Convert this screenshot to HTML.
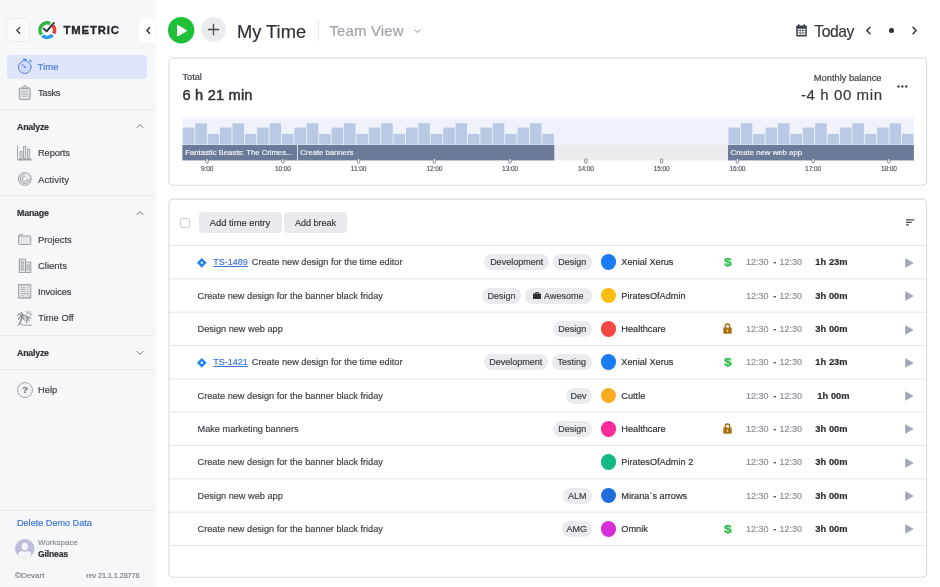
<!DOCTYPE html>
<html lang="en"><head><meta charset="utf-8"><title>TMetric - My Time</title>
<style>
*{box-sizing:border-box;margin:0;padding:0}
html,body{width:940px;height:587px;overflow:hidden;background:#fff;font-family:"Liberation Sans",sans-serif;}
.t{position:absolute;white-space:nowrap;line-height:14px;-webkit-text-stroke:0.18px currentColor;}
.abs{position:absolute}
.side{position:absolute;left:0;top:0;width:155px;height:587px;background:#f6f7f9;}
.hr{position:absolute;left:0;width:155px;height:1px;background:#e9ebee}
.card{position:absolute;background:#fff;border:1px solid #e4e5e9;border-radius:4px;}
.sep{position:absolute;left:169px;width:757px;height:1px;background:#e4e6ea}
.tag{-webkit-text-stroke:0.18px currentColor;position:absolute;height:16px;border-radius:8px;background:#eaebef;color:#3a3d45;font-size:9px;line-height:16px;text-align:center;white-space:nowrap}
.dot{position:absolute;width:15.8px;height:15.8px;border-radius:50%}
.btn{position:absolute;background:#e9eaee;border-radius:4px;color:#33363d;font-size:9px;text-align:center;white-space:nowrap}
svg{position:absolute;overflow:visible}
</style></head><body><div id="app" style="position:absolute;left:0;top:0;width:940px;height:587px;will-change:transform">

<div class="abs" style="left:155px;top:0;width:1px;height:587px;background:#f9fafb"></div>
<div class="side">
<div class="abs" style="left:6px;top:18px;width:24px;height:24px;border:1px solid #eaecef;border-radius:4px;background:#f8f9fa"></div>
<svg style="left:15px;top:26px" width="7" height="9" viewBox="0 0 7 9"><path d="M4.6 1.6 L1.8 4.4 L4.6 7.2" fill="none" stroke="#2b2e35" stroke-width="1.3" stroke-linecap="round" stroke-linejoin="round"/></svg>
<svg style="left:34.6px;top:18.2px" width="24.4" height="24.4" viewBox="0 0 24.4 24.4"><circle cx="12.2" cy="12.2" r="11.9" fill="#fff" stroke="#f1e3e7" stroke-width="0.6"/><path d="M5.03 17.80 A9.1 9.1 0 0 1 16.05 3.95 L14.52 7.22 A5.5 5.5 0 0 0 7.87 15.59 Z" fill="#2db742"/><path d="M19.37 6.60 A9.1 9.1 0 0 1 20.23 16.47 L17.06 14.78 A5.5 5.5 0 0 0 16.53 8.81 Z" fill="#ef4136"/><path d="M18.96 18.29 A9.1 9.1 0 0 1 6.11 18.96 L8.52 16.29 A5.5 5.5 0 0 0 16.29 15.88 Z" fill="#2d9ce8"/><path d="M8.6 10.6 L11.6 13.3 L18.9 4.9" fill="none" stroke="#2a2c33" stroke-width="1.8" stroke-linecap="round" stroke-linejoin="round"/></svg>
<div class="t " style="left:63.5px;top:23.30px;font-size:11.3px;color:#25272d;font-weight:700;letter-spacing:0.85px;-webkit-text-stroke:0.35px #25272d">TMETRIC</div>
<div class="abs" style="left:139px;top:18px;width:16px;height:24px;background:#fff;border-radius:4px 0 0 4px"></div>
<svg style="left:145px;top:26px" width="7" height="9" viewBox="0 0 7 9"><path d="M4.6 1.6 L1.9 4.5 L4.6 7.4" fill="none" stroke="#2b2e35" stroke-width="1.4" stroke-linecap="round" stroke-linejoin="round"/></svg>
<div class="abs" style="left:6.5px;top:55px;width:140.2px;height:23.5px;border-radius:4px;background:#dfe6fa"></div>
<svg style="left:0;top:0" width="155" height="587" viewBox="0 0 155 587">
<g fill="none" stroke="#5a84ea" stroke-linecap="round"><circle cx="24.8" cy="67.1" r="6.4" fill="#cfdafa" stroke-width="1"/><path d="M23.4 59.4 h2.8" stroke-width="1.3"/><path d="M24.8 59.6 v1" stroke-width="1"/><path d="M29.9 60.3 l1.2 1.2" stroke-width="1.3"/><path d="M21.9 64.1 L24.8 67.2" stroke-width="1"/></g><circle cx="24.8" cy="67.2" r="0.9" fill="#5a84ea"/>
<g stroke="#92969e" stroke-width="0.9" stroke-linejoin="round"><rect x="19.3" y="88" width="10.9" height="11.6" rx="1" fill="#d4d6da"/><rect x="20.8" y="89.6" width="7.9" height="8.6" fill="#e9eaed" stroke="none"/><path d="M22.3 88.3 L23.3 86.3 Q24.75 84.9 26.2 86.3 L27.2 88.3 Z" fill="#dfe0e4"/></g>
<path d="M21.4 91 h6.7 M21.4 92.8 h6.7 M21.4 94.6 h6.7 M21.4 96.4 h6.7" stroke="#a9adb4" stroke-width="0.8"/>
<g fill="#e4e5e9" stroke="#92969e" stroke-width="0.8"><path d="M17.5 145.8 V159.6 H31.8" fill="none" stroke-width="0.9"/><path d="M17.5 160.3 H31.8" fill="none" stroke-width="0.5"/><rect x="20" y="151.5" width="2" height="7.2"/><rect x="23.6" y="146.4" width="2.1" height="12.3"/><rect x="27.5" y="149" width="2.2" height="9.7"/></g>
<g fill="none" stroke="#92969e"><circle cx="24.8" cy="179" r="6.4" fill="#e9eaed" stroke-width="0.9"/><path d="M24.8 174.4 a4.6 4.6 0 1 0 4.6 4.6" stroke-width="0.8"/><path d="M24.8 176.4 a2.6 2.6 0 1 0 2.6 2.6" stroke-width="0.8"/></g><circle cx="24.6" cy="179.2" r="1.1" fill="#fbfbfc"/>
<path d="M18.6 243.4 V235.6 Q18.6 234.6 19.6 234.6 H22.6 L23.8 236 H29.8 Q30.8 236 30.8 237 V243.4 Q30.8 244.5 29.8 244.5 H19.6 Q18.6 244.5 18.6 243.4 Z" fill="#e4e5e9" stroke="#92969e" stroke-width="0.9" stroke-linejoin="round"/><path d="M18.8 236.3 H23.4" stroke="#92969e" stroke-width="0.6"/>
<g fill="#e4e5e9" stroke="#92969e" stroke-width="0.9"><rect x="19.3" y="259.1" width="6.2" height="13.3"/><rect x="25.5" y="262.2" width="5.3" height="10.2"/></g><g fill="none" stroke="#92969e" stroke-width="0.6"><rect x="21.2" y="261.6" width="2.2" height="2"/><rect x="21.2" y="264.8" width="2.2" height="2"/><rect x="21.2" y="268" width="2.2" height="2"/><rect x="27" y="264.8" width="2.2" height="2"/><rect x="27" y="268" width="2.2" height="2"/></g>
<rect x="18.6" y="284.9" width="12.2" height="13" fill="#e4e5e9" stroke="#92969e" stroke-width="0.9"/><path d="M18.4 284.5 H31 M18.4 298.3 H31" stroke="#92969e" stroke-width="0.9" stroke-dasharray="0.9 0.7"/><path d="M20.8 287.6 h4.4 M20.8 289.5 h4.4 M20.8 291.4 h4.4 M27 287.6 h1.6 M27 289.5 h1.6 M27 291.4 h1.6 M20.2 293.6 h9 M21 295.8 h3.4 M27 295.8 h1.6" stroke="#a3a7ae" stroke-width="0.8"/>
<g fill="none" stroke="#858a93" stroke-linecap="round"><path d="M17.6 325.2 Q21 322.6 23.4 325.2 H32" stroke-width="0.8"/><path d="M22.4 316.4 Q21.6 320 19.4 323.6" stroke-width="1.3"/><path d="M27.6 317.4 Q27.4 320.4 26.4 323" stroke-width="1.1"/><path d="M22.6 316 Q20 312.6 17.6 315.4 M22.6 316 Q19.6 315.6 18.4 319.4 M22.6 316 Q22.8 319 24.8 320.4 M22.6 316 Q25.4 314.8 27 317.2 M22.6 316 Q23.6 313.4 21.2 312.4 M22.6 316 Q20.8 317.6 21 320.6" stroke-width="1.1"/><path d="M27.8 317 Q25.8 315.8 24.6 318 M27.8 317 Q30 316.2 31 318.6 M27.8 317 Q29.6 318.6 29.2 321 M27.8 317 Q26.2 318.8 26.6 320.6" stroke-width="0.9"/><path d="M26.6 314.4 a2 2 0 1 1 3.6 1.4" stroke-width="0.8"/><path d="M28.2 310.8 v0.9 M31.8 314 h-0.8 M30.9 311.6 l-0.6 0.6 M25.6 311.7 l0.6 0.6" stroke-width="0.7"/></g>
</svg>
<div class="t " style="left:37.6px;top:59.80px;font-size:9.55px;color:#4a7ae0;font-weight:400;letter-spacing:0px;">Time</div>
<div class="t " style="left:38px;top:86.00px;font-size:9.3px;color:#3e4148;font-weight:400;letter-spacing:-0.32px;">Tasks</div>
<div class="hr" style="top:109px"></div>
<div class="t " style="left:17px;top:120.00px;font-size:8.9px;color:#2f3239;font-weight:700;letter-spacing:-0.25px;">Analyze</div>
<svg style="left:136px;top:123.4px" width="8" height="6" viewBox="0 0 8 6"><path d="M1 4.6 L4 1.6 L7 4.6" fill="none" stroke="#6f747d" stroke-width="1" stroke-linecap="round" stroke-linejoin="round"/></svg>
<div class="t " style="left:38px;top:146.20px;font-size:9.3px;color:#3e4148;font-weight:400;letter-spacing:-0.12px;">Reports</div>
<div class="t " style="left:38px;top:172.50px;font-size:9.6px;color:#3e4148;font-weight:400;letter-spacing:0.08px;">Activity</div>
<div class="hr" style="top:195px"></div>
<div class="t " style="left:17px;top:206.20px;font-size:8.9px;color:#2f3239;font-weight:700;letter-spacing:-0.22px;">Manage</div>
<svg style="left:136px;top:209.5px" width="8" height="6" viewBox="0 0 8 6"><path d="M1 4.6 L4 1.6 L7 4.6" fill="none" stroke="#6f747d" stroke-width="1" stroke-linecap="round" stroke-linejoin="round"/></svg>
<div class="t " style="left:38px;top:232.50px;font-size:9.35px;color:#3e4148;font-weight:400;letter-spacing:0px;">Projects</div>
<div class="t " style="left:38px;top:258.90px;font-size:9.45px;color:#3e4148;font-weight:400;letter-spacing:0px;">Clients</div>
<div class="t " style="left:38px;top:284.50px;font-size:9.3px;color:#3e4148;font-weight:400;letter-spacing:-0.1px;">Invoices</div>
<div class="t " style="left:38.3px;top:310.70px;font-size:9.4px;color:#3e4148;font-weight:400;letter-spacing:0px;">Time Off</div>
<div class="hr" style="top:335px"></div>
<div class="t " style="left:17px;top:346.20px;font-size:8.9px;color:#2f3239;font-weight:700;letter-spacing:-0.25px;">Analyze</div>
<svg style="left:136px;top:350px" width="8" height="6" viewBox="0 0 8 6"><path d="M1 1.4 L4 4.4 L7 1.4" fill="none" stroke="#6f747d" stroke-width="1" stroke-linecap="round" stroke-linejoin="round"/></svg>
<div class="hr" style="top:369px"></div>
<div class="abs" style="left:16.7px;top:381.8px;width:16px;height:16px;border-radius:50%;border:1px solid #a3a7ae;background:#f1f2f4"></div>
<div class="t " style="left:22.2px;top:383.00px;font-size:9.5px;color:#70757d;font-weight:700;letter-spacing:0px;">?</div>
<div class="t " style="left:38px;top:382.80px;font-size:9.3px;color:#3e4148;font-weight:400;letter-spacing:0px;">Help</div>
<div class="hr" style="top:510px"></div>
<div class="t " style="left:17px;top:515.50px;font-size:9.1px;color:#3f74dc;font-weight:400;letter-spacing:0px;">Delete Demo Data</div>
<svg style="left:15px;top:539px" width="19.5" height="19.5" viewBox="0 0 20 20">
<defs><clipPath id="av"><circle cx="10" cy="10" r="10"/></clipPath></defs>
<circle cx="10" cy="10" r="10" fill="#b9bfdd"/>
<g clip-path="url(#av)"><ellipse cx="10" cy="7.8" rx="3.3" ry="3.9" fill="#f4f5fb"/><path d="M3.2 20 V16.4 Q3.2 12.8 7.2 12.2 Q10 14 12.8 12.2 Q16.8 12.8 16.8 16.4 V20 Z" fill="#f4f5fb"/></g>
</svg>
<div class="t " style="left:38px;top:535.80px;font-size:8px;color:#868b94;font-weight:400;letter-spacing:0px;">Workspace</div>
<div class="t " style="left:38px;top:546.60px;font-size:8.6px;color:#26282e;font-weight:700;letter-spacing:-0.15px;">Gilneas</div>
<div class="t " style="left:15px;top:568.50px;font-size:8px;color:#7d828b;font-weight:400;letter-spacing:0px;">©Devart</div>
<div class="t " style="left:86.3px;top:568.50px;font-size:7.3px;color:#7d828b;font-weight:400;letter-spacing:-0.1px;">rev 21.1.1.28778</div>
</div>
<svg style="left:168.2px;top:16.5px" width="26.4" height="26.4" viewBox="0 0 26.4 26.4"><circle cx="13.2" cy="13.2" r="13.2" fill="#20c038"/><path d="M9.9 9 L17.9 13.7 L9.9 18.4 Z" fill="#fff" stroke="#fff" stroke-width="1.8" stroke-linejoin="round"/></svg>
<svg style="left:200.6px;top:17.3px" width="25" height="25" viewBox="0 0 25 25"><circle cx="12.5" cy="12.5" r="12.5" fill="#ebecf0"/><path d="M12.5 6.8 V18.2 M6.8 12.5 H18.2" stroke="#4a4d55" stroke-width="1.3"/></svg>
<div class="t " style="left:237px;top:24.70px;font-size:18.3px;color:#2e3138;font-weight:400;letter-spacing:0px;line-height:22px;margin-top:-4px">My Time</div>
<div class="abs" style="left:318px;top:19px;width:1px;height:22px;background:#e6e8eb"></div>
<div class="t " style="left:329.4px;top:23.70px;font-size:14.9px;color:#9ea2ab;font-weight:400;letter-spacing:0.2px;line-height:22px;margin-top:-4px">Team View</div>
<svg style="left:413.6px;top:28.8px" width="7" height="5" viewBox="0 0 7 5"><path d="M1 1 L3.5 3.6 L6 1" fill="none" stroke="#8a8f98" stroke-width="1" stroke-linecap="round" stroke-linejoin="round"/></svg>
<svg style="left:795.8px;top:23.6px" width="11" height="12.7" viewBox="0 0 11 12.7"><path d="M2.7 0.3 V2.4 M8.3 0.3 V2.4" stroke="#3a3d45" stroke-width="1.4"/><rect x="0.2" y="1.6" width="10.6" height="10.9" rx="1.2" fill="#3a3d45"/><g fill="#fff"><rect x="1.6" y="4.7" width="2.2" height="1.7"/><rect x="4.4" y="4.7" width="2.2" height="1.7"/><rect x="7.2" y="4.7" width="2.2" height="1.7"/><rect x="1.6" y="7" width="2.2" height="1.7"/><rect x="4.4" y="7" width="2.2" height="1.7"/><rect x="7.2" y="7" width="2.2" height="1.7"/><rect x="1.6" y="9.3" width="2.2" height="1.7"/><rect x="4.4" y="9.3" width="2.2" height="1.7"/><rect x="7.2" y="9.3" width="2.2" height="1.7"/></g></svg>
<div class="t " style="left:814.3px;top:24.80px;font-size:15.7px;color:#33363d;font-weight:400;letter-spacing:-0.45px;line-height:22px;margin-top:-4px">Today</div>
<svg style="left:865px;top:25.6px" width="7" height="9" viewBox="0 0 7 9"><path d="M5 1.2 L1.8 4.5 L5 7.8" fill="none" stroke="#2b2e35" stroke-width="1.4" stroke-linecap="round" stroke-linejoin="round"/></svg>
<div class="abs" style="left:889px;top:28.2px;width:4.6px;height:4.6px;border-radius:50%;background:#2b2e35"></div>
<svg style="left:911.4px;top:25.6px" width="7" height="9" viewBox="0 0 7 9"><path d="M2 1.2 L5.2 4.5 L2 7.8" fill="none" stroke="#2b2e35" stroke-width="1.4" stroke-linecap="round" stroke-linejoin="round"/></svg>
<svg style="left:0;top:0" width="940" height="587" viewBox="0 0 940 587"><rect x="169" y="58" width="757.6" height="127.2" rx="4" fill="#fff" stroke="#d9dade" stroke-width="1.05"/><rect x="169" y="199.1" width="757.6" height="378.2" rx="4" fill="#fff" stroke="#d9dade" stroke-width="1.05"/></svg>
<div class="t " style="left:182.5px;top:70.00px;font-size:9.2px;color:#3a3d45;font-weight:400;letter-spacing:0px;">Total</div>
<div class="t " style="left:182.5px;top:88.40px;font-size:14.6px;color:#30333a;font-weight:400;letter-spacing:0.2px;line-height:20px;margin-top:-3px;-webkit-text-stroke:0.5px #30333a">6 h 21 min</div>
<div class="t" style="right:58.5px;top:70.70px;font-size:9.3px;color:#3a3d45;font-weight:400;letter-spacing:0px;">Monthly balance</div>
<div class="t" style="right:58px;top:87.90px;font-size:15.0px;color:#33363d;font-weight:400;letter-spacing:0.6px;margin-right:-0.6px;line-height:20px;margin-top:-3px">-4 h 00 min</div>
<svg style="left:896.6px;top:85.2px" width="11" height="3" viewBox="0 0 11 3"><circle cx="1.5" cy="1.5" r="1.15" fill="#2b2e35"/><circle cx="5.4" cy="1.5" r="1.15" fill="#2b2e35"/><circle cx="9.3" cy="1.5" r="1.15" fill="#2b2e35"/></svg>
<svg style="left:0;top:0" width="940" height="200" viewBox="0 0 940 200">
<rect x="182.4" y="117.8" width="731.5" height="27.2" fill="#eef2fb"/>
<rect x="182.4" y="145.0" width="731.5" height="15.4" fill="#ececef"/>
<g fill="#b9c8e3"><rect x="182.85" y="127.6" width="11.50" height="17.0"/><rect x="195.25" y="123.3" width="11.50" height="21.3"/><rect x="207.64" y="133.9" width="11.50" height="10.7"/><rect x="220.04" y="127.6" width="11.50" height="17.0"/><rect x="232.44" y="123.3" width="11.50" height="21.3"/><rect x="244.83" y="133.9" width="11.50" height="10.7"/><rect x="257.23" y="127.6" width="11.50" height="17.0"/><rect x="269.63" y="123.3" width="11.50" height="21.3"/><rect x="282.02" y="133.9" width="11.50" height="10.7"/><rect x="294.42" y="127.6" width="11.50" height="17.0"/><rect x="306.82" y="123.3" width="11.50" height="21.3"/><rect x="319.21" y="133.9" width="11.50" height="10.7"/><rect x="331.61" y="127.6" width="11.50" height="17.0"/><rect x="344.01" y="123.3" width="11.50" height="21.3"/><rect x="356.40" y="133.9" width="11.50" height="10.7"/><rect x="368.80" y="127.6" width="11.50" height="17.0"/><rect x="381.20" y="123.3" width="11.50" height="21.3"/><rect x="393.59" y="133.9" width="11.50" height="10.7"/><rect x="405.99" y="127.6" width="11.50" height="17.0"/><rect x="418.39" y="123.3" width="11.50" height="21.3"/><rect x="430.78" y="133.9" width="11.50" height="10.7"/><rect x="443.18" y="127.6" width="11.50" height="17.0"/><rect x="455.58" y="123.3" width="11.50" height="21.3"/><rect x="467.97" y="133.9" width="11.50" height="10.7"/><rect x="480.37" y="127.6" width="11.50" height="17.0"/><rect x="492.77" y="123.3" width="11.50" height="21.3"/><rect x="505.16" y="133.9" width="11.50" height="10.7"/><rect x="517.56" y="127.6" width="11.50" height="17.0"/><rect x="529.96" y="123.3" width="11.50" height="21.3"/><rect x="542.35" y="133.9" width="11.50" height="10.7"/><rect x="728.45" y="127.6" width="11.49" height="17.0"/><rect x="740.84" y="123.3" width="11.49" height="21.3"/><rect x="753.24" y="133.9" width="11.49" height="10.7"/><rect x="765.63" y="127.6" width="11.49" height="17.0"/><rect x="778.02" y="123.3" width="11.49" height="21.3"/><rect x="790.42" y="133.9" width="11.49" height="10.7"/><rect x="802.81" y="127.6" width="11.49" height="17.0"/><rect x="815.20" y="123.3" width="11.49" height="21.3"/><rect x="827.60" y="133.9" width="11.49" height="10.7"/><rect x="839.99" y="127.6" width="11.49" height="17.0"/><rect x="852.38" y="123.3" width="11.49" height="21.3"/><rect x="864.78" y="133.9" width="11.49" height="10.7"/><rect x="877.17" y="127.6" width="11.49" height="17.0"/><rect x="889.56" y="123.3" width="11.49" height="21.3"/><rect x="901.96" y="133.9" width="11.49" height="10.7"/></g>
<rect x="182.4" y="145.0" width="371.9" height="15.4" fill="#6b7a99"/>
<rect x="728.0" y="145.0" width="185.9" height="15.4" fill="#6b7a99"/>
<rect x="297" y="145.0" width="0.9" height="15.4" fill="#e8ebf2"/>
<rect x="205.95" y="158.7" width="2.3" height="4.6" rx="1.15" fill="#f3f4f7" stroke="#666b77" stroke-width="0.7"/>
<rect x="281.70" y="158.7" width="2.3" height="4.6" rx="1.15" fill="#f3f4f7" stroke="#666b77" stroke-width="0.7"/>
<rect x="357.45" y="158.7" width="2.3" height="4.6" rx="1.15" fill="#f3f4f7" stroke="#666b77" stroke-width="0.7"/>
<rect x="433.20" y="158.7" width="2.3" height="4.6" rx="1.15" fill="#f3f4f7" stroke="#666b77" stroke-width="0.7"/>
<rect x="508.95" y="158.7" width="2.3" height="4.6" rx="1.15" fill="#f3f4f7" stroke="#666b77" stroke-width="0.7"/>
<rect x="584.70" y="158.7" width="2.3" height="4.6" rx="1.15" fill="#f3f4f7" stroke="#666b77" stroke-width="0.7"/>
<rect x="660.45" y="158.7" width="2.3" height="4.6" rx="1.15" fill="#f3f4f7" stroke="#666b77" stroke-width="0.7"/>
<rect x="736.20" y="158.7" width="2.3" height="4.6" rx="1.15" fill="#f3f4f7" stroke="#666b77" stroke-width="0.7"/>
<rect x="811.95" y="158.7" width="2.3" height="4.6" rx="1.15" fill="#f3f4f7" stroke="#666b77" stroke-width="0.7"/>
<rect x="887.70" y="158.7" width="2.3" height="4.6" rx="1.15" fill="#f3f4f7" stroke="#666b77" stroke-width="0.7"/>
</svg>
<div class="t " style="left:185.3px;top:146.20px;font-size:7.7px;color:#f1f3f8;font-weight:400;letter-spacing:0px;">Fantastic Beasts: The Crimes...</div>
<div class="t " style="left:300.3px;top:146.20px;font-size:7.7px;color:#f1f3f8;font-weight:400;letter-spacing:0px;">Create banners</div>
<div class="t " style="left:730.6px;top:146.20px;font-size:7.8px;color:#f1f3f8;font-weight:400;letter-spacing:0px;">Create new web app</div>
<div class="t" style="left:187.1px;width:40px;text-align:center;top:162.4px;font-size:6.6px;letter-spacing:-0.1px;color:#555963">9:00</div>
<div class="t" style="left:262.9px;width:40px;text-align:center;top:162.4px;font-size:6.6px;letter-spacing:-0.1px;color:#555963">10:00</div>
<div class="t" style="left:338.6px;width:40px;text-align:center;top:162.4px;font-size:6.6px;letter-spacing:-0.1px;color:#555963">11:00</div>
<div class="t" style="left:414.4px;width:40px;text-align:center;top:162.4px;font-size:6.6px;letter-spacing:-0.1px;color:#555963">12:00</div>
<div class="t" style="left:490.1px;width:40px;text-align:center;top:162.4px;font-size:6.6px;letter-spacing:-0.1px;color:#555963">13:00</div>
<div class="t" style="left:565.9px;width:40px;text-align:center;top:162.4px;font-size:6.6px;letter-spacing:-0.1px;color:#555963">14:00</div>
<div class="t" style="left:641.6px;width:40px;text-align:center;top:162.4px;font-size:6.6px;letter-spacing:-0.1px;color:#555963">15:00</div>
<div class="t" style="left:717.4px;width:40px;text-align:center;top:162.4px;font-size:6.6px;letter-spacing:-0.1px;color:#555963">16:00</div>
<div class="t" style="left:793.1px;width:40px;text-align:center;top:162.4px;font-size:6.6px;letter-spacing:-0.1px;color:#555963">17:00</div>
<div class="t" style="left:868.9px;width:40px;text-align:center;top:162.4px;font-size:6.6px;letter-spacing:-0.1px;color:#555963">18:00</div>
<div class="abs" style="left:180.2px;top:217.8px;width:10px;height:10px;border:1px solid #cdd0d6;border-radius:2px;background:#fff"></div>
<div class="btn" style="left:199px;top:212px;width:82.6px;height:20.5px"></div>
<div class="btn" style="left:284.3px;top:212px;width:62.4px;height:20.5px"></div>
<div class="t " style="left:209.7px;top:215.70px;font-size:9.4px;color:#33363d;font-weight:400;letter-spacing:0px;">Add time entry</div>
<div class="t " style="left:294.9px;top:215.70px;font-size:9.05px;color:#33363d;font-weight:400;letter-spacing:0px;">Add break</div>
<svg style="left:906px;top:219px" width="9" height="7" viewBox="0 0 9 7"><path d="M0 0.8 H8.3 M0 3.3 H5.7 M0 5.8 H3" stroke="#464a53" stroke-width="1.3"/></svg>
<svg style="left:196.7px;top:257.7px" width="9.6" height="9.6" viewBox="0 0 9.6 9.6"><path d="M4.8 0.2 L9.4 4.8 L4.8 9.4 L0.2 4.8 Z" fill="#1d7ff2" stroke="#1d7ff2" stroke-width="0.4" stroke-linejoin="round"/><path d="M4.8 3.3 L6.3 4.8 L4.8 6.3 L3.3 4.8 Z" fill="#fff"/></svg>
<div class="t " style="left:213.3px;top:255.20px;font-size:9.0px;color:#3f74dc;font-weight:400;letter-spacing:0px;text-decoration:underline">TS-1489</div>
<div class="t " style="left:251.8px;top:255.20px;font-size:9.2px;color:#40434a;font-weight:400;letter-spacing:0px;">Create new design for the time editor</div>
<div class="tag" style="left:552.9px;top:254.2px;width:38.7px">Design</div>
<div class="tag" style="left:484.4px;top:254.2px;width:64.5px">Development</div>
<div class="dot" style="left:600.5px;top:254.3px;background:#1a7cf4"></div>
<div class="t " style="left:621.3px;top:255.20px;font-size:9.2px;color:#2f3239;font-weight:400;letter-spacing:0px;">Xenial Xerus</div>
<div class="t " style="left:723.6px;top:255.20px;font-size:11.6px;color:#2dbd4a;font-weight:700;letter-spacing:0px;transform:scaleX(1.19);transform-origin:0 50%;-webkit-text-stroke:0.25px #2dbd4a">$</div>
<div class="t " style="left:745.9px;top:255.20px;font-size:9px;color:#8a8e97;font-weight:400;letter-spacing:0px;">12:30</div>
<div class="t " style="left:773.2px;top:255.20px;font-size:9px;color:#50545c;font-weight:700;letter-spacing:0px;">-</div>
<div class="t " style="left:779.6px;top:255.20px;font-size:9px;color:#8a8e97;font-weight:400;letter-spacing:0px;">12:30</div>
<div class="t " style="left:815.3px;top:255.20px;font-size:9.3px;color:#2a2c33;font-weight:700;letter-spacing:0.05px;">1h 23m</div>
<svg style="left:905.2px;top:257.8px" width="9" height="10" viewBox="0 0 9 10"><path d="M0.6 0.8 L8 5 L0.6 9.2 Z" fill="#a3a6b8" stroke="#a3a6b8" stroke-width="0.8" stroke-linejoin="round"/></svg>
<div class="t " style="left:197.5px;top:288.53px;font-size:9.2px;color:#40434a;font-weight:400;letter-spacing:0px;">Create new design for the banner black friday</div>
<div class="tag" style="left:524.9px;top:287.5px;width:66.7px;padding-left:11px">Awesome</div>
<svg style="left:532.9px;top:291.7px" width="8" height="7" viewBox="0 0 8 7"><rect x="0" y="1.6" width="8" height="5.4" rx="0.7" fill="#2b2e35"/><path d="M2.6 1.6 V0.5 H5.4 V1.6" fill="none" stroke="#2b2e35" stroke-width="0.9"/></svg>
<div class="tag" style="left:482.2px;top:287.5px;width:38.7px">Design</div>
<div class="dot" style="left:600.5px;top:287.6px;background:#fdbd10"></div>
<div class="t " style="left:621.3px;top:288.53px;font-size:9.2px;color:#2f3239;font-weight:400;letter-spacing:0px;">PiratesOfAdmin</div>
<div class="t " style="left:745.9px;top:288.53px;font-size:9px;color:#8a8e97;font-weight:400;letter-spacing:0px;">12:30</div>
<div class="t " style="left:773.2px;top:288.53px;font-size:9px;color:#50545c;font-weight:700;letter-spacing:0px;">-</div>
<div class="t " style="left:779.6px;top:288.53px;font-size:9px;color:#8a8e97;font-weight:400;letter-spacing:0px;">12:30</div>
<div class="t " style="left:815.3px;top:288.53px;font-size:9.3px;color:#2a2c33;font-weight:700;letter-spacing:0.05px;">3h 00m</div>
<svg style="left:905.2px;top:291.1px" width="9" height="10" viewBox="0 0 9 10"><path d="M0.6 0.8 L8 5 L0.6 9.2 Z" fill="#a3a6b8" stroke="#a3a6b8" stroke-width="0.8" stroke-linejoin="round"/></svg>
<div class="t " style="left:197.5px;top:321.86px;font-size:9.2px;color:#40434a;font-weight:400;letter-spacing:0px;">Design new web app</div>
<div class="tag" style="left:552.9px;top:320.9px;width:38.7px">Design</div>
<div class="dot" style="left:600.5px;top:321.0px;background:#f4473f"></div>
<div class="t " style="left:621.3px;top:321.86px;font-size:9.2px;color:#2f3239;font-weight:400;letter-spacing:0px;">Healthcare</div>
<svg style="left:723.2px;top:323.1px" width="9" height="11" viewBox="0 0 9 11"><path d="M2.3 5 V3.2 a2.2 2.2 0 0 1 4.4 0 V5" fill="none" stroke="#a56a12" stroke-width="1.3"/><rect x="0.3" y="4.6" width="8.4" height="6.2" rx="1" fill="#a8700f"/><rect x="3.9" y="6.6" width="1.2" height="2.2" fill="#f3d9a0"/></svg>
<div class="t " style="left:745.9px;top:321.86px;font-size:9px;color:#8a8e97;font-weight:400;letter-spacing:0px;">12:30</div>
<div class="t " style="left:773.2px;top:321.86px;font-size:9px;color:#50545c;font-weight:700;letter-spacing:0px;">-</div>
<div class="t " style="left:779.6px;top:321.86px;font-size:9px;color:#8a8e97;font-weight:400;letter-spacing:0px;">12:30</div>
<div class="t " style="left:815.3px;top:321.86px;font-size:9.3px;color:#2a2c33;font-weight:700;letter-spacing:0.05px;">3h 00m</div>
<svg style="left:905.2px;top:324.5px" width="9" height="10" viewBox="0 0 9 10"><path d="M0.6 0.8 L8 5 L0.6 9.2 Z" fill="#a3a6b8" stroke="#a3a6b8" stroke-width="0.8" stroke-linejoin="round"/></svg>
<svg style="left:196.7px;top:357.7px" width="9.6" height="9.6" viewBox="0 0 9.6 9.6"><path d="M4.8 0.2 L9.4 4.8 L4.8 9.4 L0.2 4.8 Z" fill="#1d7ff2" stroke="#1d7ff2" stroke-width="0.4" stroke-linejoin="round"/><path d="M4.8 3.3 L6.3 4.8 L4.8 6.3 L3.3 4.8 Z" fill="#fff"/></svg>
<div class="t " style="left:213.3px;top:355.19px;font-size:9.0px;color:#3f74dc;font-weight:400;letter-spacing:0px;text-decoration:underline">TS-1421</div>
<div class="t " style="left:251.8px;top:355.19px;font-size:9.2px;color:#40434a;font-weight:400;letter-spacing:0px;">Create new design for the time editor</div>
<div class="tag" style="left:552.1px;top:354.2px;width:39.5px">Testing</div>
<div class="tag" style="left:483.6px;top:354.2px;width:64.5px">Development</div>
<div class="dot" style="left:600.5px;top:354.3px;background:#1a7cf4"></div>
<div class="t " style="left:621.3px;top:355.19px;font-size:9.2px;color:#2f3239;font-weight:400;letter-spacing:0px;">Xenial Xerus</div>
<div class="t " style="left:723.6px;top:355.19px;font-size:11.6px;color:#2dbd4a;font-weight:700;letter-spacing:0px;transform:scaleX(1.19);transform-origin:0 50%;-webkit-text-stroke:0.25px #2dbd4a">$</div>
<div class="t " style="left:745.9px;top:355.19px;font-size:9px;color:#8a8e97;font-weight:400;letter-spacing:0px;">12:30</div>
<div class="t " style="left:773.2px;top:355.19px;font-size:9px;color:#50545c;font-weight:700;letter-spacing:0px;">-</div>
<div class="t " style="left:779.6px;top:355.19px;font-size:9px;color:#8a8e97;font-weight:400;letter-spacing:0px;">12:30</div>
<div class="t " style="left:815.3px;top:355.19px;font-size:9.3px;color:#2a2c33;font-weight:700;letter-spacing:0.05px;">1h 23m</div>
<svg style="left:905.2px;top:357.8px" width="9" height="10" viewBox="0 0 9 10"><path d="M0.6 0.8 L8 5 L0.6 9.2 Z" fill="#a3a6b8" stroke="#a3a6b8" stroke-width="0.8" stroke-linejoin="round"/></svg>
<div class="t " style="left:197.5px;top:388.52px;font-size:9.2px;color:#40434a;font-weight:400;letter-spacing:0px;">Create new design for the banner black friday</div>
<div class="tag" style="left:565.6px;top:387.5px;width:26px">Dev</div>
<div class="dot" style="left:600.5px;top:387.6px;background:#fbab1d"></div>
<div class="t " style="left:621.3px;top:388.52px;font-size:9.2px;color:#2f3239;font-weight:400;letter-spacing:0px;">Cuttle</div>
<div class="t " style="left:745.9px;top:388.52px;font-size:9px;color:#8a8e97;font-weight:400;letter-spacing:0px;">12:30</div>
<div class="t " style="left:773.2px;top:388.52px;font-size:9px;color:#50545c;font-weight:700;letter-spacing:0px;">-</div>
<div class="t " style="left:779.6px;top:388.52px;font-size:9px;color:#8a8e97;font-weight:400;letter-spacing:0px;">12:30</div>
<div class="t " style="left:817.3px;top:388.52px;font-size:9.3px;color:#2a2c33;font-weight:700;letter-spacing:0.05px;">1h 00m</div>
<svg style="left:905.2px;top:391.1px" width="9" height="10" viewBox="0 0 9 10"><path d="M0.6 0.8 L8 5 L0.6 9.2 Z" fill="#a3a6b8" stroke="#a3a6b8" stroke-width="0.8" stroke-linejoin="round"/></svg>
<div class="t " style="left:197.5px;top:421.85px;font-size:9.2px;color:#40434a;font-weight:400;letter-spacing:0px;">Make marketing banners</div>
<div class="tag" style="left:552.9px;top:420.8px;width:38.7px">Design</div>
<div class="dot" style="left:600.5px;top:420.9px;background:#fb2a97"></div>
<div class="t " style="left:621.3px;top:421.85px;font-size:9.2px;color:#2f3239;font-weight:400;letter-spacing:0px;">Healthcare</div>
<svg style="left:723.2px;top:423.0px" width="9" height="11" viewBox="0 0 9 11"><path d="M2.3 5 V3.2 a2.2 2.2 0 0 1 4.4 0 V5" fill="none" stroke="#a56a12" stroke-width="1.3"/><rect x="0.3" y="4.6" width="8.4" height="6.2" rx="1" fill="#a8700f"/><rect x="3.9" y="6.6" width="1.2" height="2.2" fill="#f3d9a0"/></svg>
<div class="t " style="left:745.9px;top:421.85px;font-size:9px;color:#8a8e97;font-weight:400;letter-spacing:0px;">12:30</div>
<div class="t " style="left:773.2px;top:421.85px;font-size:9px;color:#50545c;font-weight:700;letter-spacing:0px;">-</div>
<div class="t " style="left:779.6px;top:421.85px;font-size:9px;color:#8a8e97;font-weight:400;letter-spacing:0px;">12:30</div>
<div class="t " style="left:815.3px;top:421.85px;font-size:9.3px;color:#2a2c33;font-weight:700;letter-spacing:0.05px;">3h 00m</div>
<svg style="left:905.2px;top:424.4px" width="9" height="10" viewBox="0 0 9 10"><path d="M0.6 0.8 L8 5 L0.6 9.2 Z" fill="#a3a6b8" stroke="#a3a6b8" stroke-width="0.8" stroke-linejoin="round"/></svg>
<div class="t " style="left:197.5px;top:455.18px;font-size:9.2px;color:#40434a;font-weight:400;letter-spacing:0px;">Create new design for the banner black friday</div>
<div class="dot" style="left:600.5px;top:454.3px;background:#12b886"></div>
<div class="t " style="left:621.3px;top:455.18px;font-size:9.2px;color:#2f3239;font-weight:400;letter-spacing:0px;">PiratesOfAdmin 2</div>
<div class="t " style="left:745.9px;top:455.18px;font-size:9px;color:#8a8e97;font-weight:400;letter-spacing:0px;">12:30</div>
<div class="t " style="left:773.2px;top:455.18px;font-size:9px;color:#50545c;font-weight:700;letter-spacing:0px;">-</div>
<div class="t " style="left:779.6px;top:455.18px;font-size:9px;color:#8a8e97;font-weight:400;letter-spacing:0px;">12:30</div>
<div class="t " style="left:815.3px;top:455.18px;font-size:9.3px;color:#2a2c33;font-weight:700;letter-spacing:0.05px;">3h 00m</div>
<svg style="left:905.2px;top:457.8px" width="9" height="10" viewBox="0 0 9 10"><path d="M0.6 0.8 L8 5 L0.6 9.2 Z" fill="#a3a6b8" stroke="#a3a6b8" stroke-width="0.8" stroke-linejoin="round"/></svg>
<div class="t " style="left:197.5px;top:488.51px;font-size:9.2px;color:#40434a;font-weight:400;letter-spacing:0px;">Design new web app</div>
<div class="tag" style="left:563.1px;top:487.5px;width:28.5px">ALM</div>
<div class="dot" style="left:600.5px;top:487.6px;background:#1e6ee0"></div>
<div class="t " style="left:621.3px;top:488.51px;font-size:9.2px;color:#2f3239;font-weight:400;letter-spacing:0px;">Mirana`s arrows</div>
<div class="t " style="left:745.9px;top:488.51px;font-size:9px;color:#8a8e97;font-weight:400;letter-spacing:0px;">12:30</div>
<div class="t " style="left:773.2px;top:488.51px;font-size:9px;color:#50545c;font-weight:700;letter-spacing:0px;">-</div>
<div class="t " style="left:779.6px;top:488.51px;font-size:9px;color:#8a8e97;font-weight:400;letter-spacing:0px;">12:30</div>
<div class="t " style="left:815.3px;top:488.51px;font-size:9.3px;color:#2a2c33;font-weight:700;letter-spacing:0.05px;">3h 00m</div>
<svg style="left:905.2px;top:491.1px" width="9" height="10" viewBox="0 0 9 10"><path d="M0.6 0.8 L8 5 L0.6 9.2 Z" fill="#a3a6b8" stroke="#a3a6b8" stroke-width="0.8" stroke-linejoin="round"/></svg>
<div class="t " style="left:197.5px;top:521.84px;font-size:9.2px;color:#40434a;font-weight:400;letter-spacing:0px;">Create new design for the banner black friday</div>
<div class="tag" style="left:562.1px;top:520.8px;width:29.5px">AMG</div>
<div class="dot" style="left:600.5px;top:520.9px;background:#d62fd8"></div>
<div class="t " style="left:621.3px;top:521.84px;font-size:9.2px;color:#2f3239;font-weight:400;letter-spacing:0px;">Omnik</div>
<div class="t " style="left:723.6px;top:521.84px;font-size:11.6px;color:#2dbd4a;font-weight:700;letter-spacing:0px;transform:scaleX(1.19);transform-origin:0 50%;-webkit-text-stroke:0.25px #2dbd4a">$</div>
<div class="t " style="left:745.9px;top:521.84px;font-size:9px;color:#8a8e97;font-weight:400;letter-spacing:0px;">12:30</div>
<div class="t " style="left:773.2px;top:521.84px;font-size:9px;color:#50545c;font-weight:700;letter-spacing:0px;">-</div>
<div class="t " style="left:779.6px;top:521.84px;font-size:9px;color:#8a8e97;font-weight:400;letter-spacing:0px;">12:30</div>
<div class="t " style="left:815.3px;top:521.84px;font-size:9.3px;color:#2a2c33;font-weight:700;letter-spacing:0.05px;">3h 00m</div>
<svg style="left:905.2px;top:524.4px" width="9" height="10" viewBox="0 0 9 10"><path d="M0.6 0.8 L8 5 L0.6 9.2 Z" fill="#a3a6b8" stroke="#a3a6b8" stroke-width="0.8" stroke-linejoin="round"/></svg>
<svg style="left:0;top:0" width="940" height="587" viewBox="0 0 940 587"><rect x="169.5" y="245.00" width="756.6" height="1" fill="#e3e4e7"/><rect x="169.5" y="278.33" width="756.6" height="1" fill="#e3e4e7"/><rect x="169.5" y="311.66" width="756.6" height="1" fill="#e3e4e7"/><rect x="169.5" y="344.99" width="756.6" height="1" fill="#e3e4e7"/><rect x="169.5" y="378.32" width="756.6" height="1" fill="#e3e4e7"/><rect x="169.5" y="411.65" width="756.6" height="1" fill="#e3e4e7"/><rect x="169.5" y="444.98" width="756.6" height="1" fill="#e3e4e7"/><rect x="169.5" y="478.31" width="756.6" height="1" fill="#e3e4e7"/><rect x="169.5" y="511.64" width="756.6" height="1" fill="#e3e4e7"/><rect x="169.5" y="544.97" width="756.6" height="1" fill="#e3e4e7"/></svg>
</div></body></html>
